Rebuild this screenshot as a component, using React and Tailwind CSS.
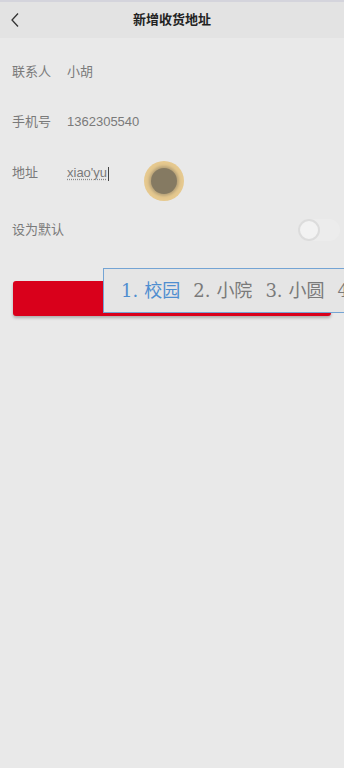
import React from "react";

function Row({ label, children, className = "" }) {
  return (
    <div className={"flex items-center px-3 text-[13px] text-[#7a7a7a] " + className}>
      <span className="w-[55px] shrink-0">{label}</span>
      {children}
    </div>
  );
}

export default function App() {
  return (
    <div
      className="relative w-[344px] h-[768px] bg-[#e9e9e9] overflow-hidden"
      style={{ fontFamily: '"Liberation Sans", "Noto Sans CJK SC", sans-serif' }}
    >
      <div className="h-[2px] bg-[#d4d4dc]" />
      <div className="relative flex items-center justify-center h-[36px] bg-[#e3e3e3]">
        <svg className="absolute left-[9px] top-[10px]" width="12" height="16" viewBox="0 0 12 16">
          <path d="M9 1.5 L3 8 L9 14.5" fill="none" stroke="#333" strokeWidth="1.3" />
        </svg>
        <span className="text-[13px] font-bold text-[#222]">新增收货地址</span>
      </div>

      <div className="pt-[9px]">
        <Row label="联系人" className="h-[50px]">
          <span>小胡</span>
        </Row>
        <Row label="手机号" className="h-[50px]">
          <span>1362305540</span>
        </Row>
        <Row label="地址" className="h-[52px]">
          <span className="relative">
            <span className="underline decoration-dotted decoration-[#888] underline-offset-2">xiao'yu</span>
            <span className="inline-block w-px h-[14px] bg-[#444] align-middle ml-px" />
          </span>
        </Row>
        <div className="flex items-center justify-between h-[62px] pl-3 pr-1 text-[13px] text-[#7a7a7a]">
          <span>设为默认</span>
          <div className="relative w-[42px] h-[22px] rounded-full bg-[#ececec]">
            <div className="absolute left-0 top-0 w-[22px] h-[22px] rounded-full bg-[#f2f2f2] border-2 border-[#dcdcdc]" />
          </div>
        </div>
        <div className="px-[13px] pt-[20px]">
          <div className="h-[35px] rounded-[3px] bg-[#d9001b] shadow-[0_2px_3px_rgba(0,0,0,0.25)]" />
        </div>
      </div>

      {/* touch indicator */}
      <div className="absolute left-[144px] top-[161px] w-[40px] h-[40px] rounded-full bg-[#e6c98f] flex items-center justify-center">
        <div className="w-[26px] h-[26px] rounded-full bg-[#857a62] shadow-[0_0_3px_2px_rgba(133,122,98,0.5)]" />
      </div>

      {/* IME candidate popup */}
      <div
        className="absolute left-[103px] top-[268px] w-[260px] h-[45px] bg-[#e5e5e5] border border-[#74a4d4] flex items-center pl-[17px] text-[18px] whitespace-nowrap"
        style={{ fontFamily: '"DejaVu Serif", "Noto Sans CJK SC", serif' }}
      >
        <span className="text-[#4f8ed0]">1.<span className="ml-[6px]">校园</span></span>
        <span className="ml-[13px] text-[#7a7a7a]">2.<span className="ml-[6px]">小院</span></span>
        <span className="ml-[13px] text-[#7a7a7a]">3.<span className="ml-[6px]">小圆</span></span>
        <span className="ml-[13px] text-[#7a7a7a]">4</span>
      </div>
    </div>
  );
}
